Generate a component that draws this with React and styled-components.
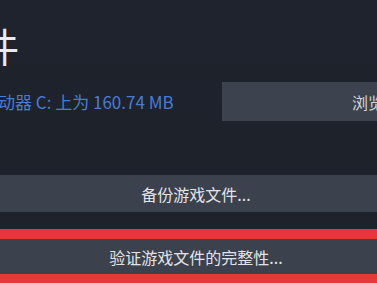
import styled, { createGlobalStyle } from "styled-components"

const Global = createGlobalStyle`
  html, body {
    margin: 0;
    padding: 0;
    background: #1e222b;
  }
  body {
    font-family: "Noto Sans CJK SC", "Noto Sans", sans-serif;
  }
`

const Page = styled.div`
  width: 377px;
  height: 283px;
  overflow: hidden;
  background: linear-gradient(180deg, #1f232d 0%, #1d212a 100%);
  position: relative;
`

const Panel = styled.div`
  width: 392px;
  display: flex;
  flex-direction: column;
`

const Title = styled.h1`
  margin: 0;
  padding-top: 19px;
  margin-left: -61px;
  font-size: 40px;
  line-height: 52px;
  font-weight: 400;
  color: #e9eaec;
  white-space: nowrap;
`

const Row = styled.div`
  display: flex;
  align-items: center;
  margin-top: 11px;
  height: 39px;
`

const Info = styled.div`
  flex: 1;
  margin-left: -19px;
  font-size: 17px;
  color: #4a7cd3;
  white-space: nowrap;
`

const Browse = styled.div`
  width: 300px;
  height: 39px;
  flex-shrink: 0;
  margin-right: -130px;
  background: #3c424e;
  color: #d4d6da;
  font-size: 16px;
  display: flex;
  align-items: center;
  padding-left: 130px;
  box-sizing: border-box;
  white-space: nowrap;
`

const Button = styled.div`
  height: ${props => props.h}px;
  background: #3b414d;
  color: #e2e3e6;
  font-size: 16px;
  display: flex;
  align-items: center;
  justify-content: center;
  margin-top: ${props => props.top}px;
`

const Highlight = styled.div`
  margin-top: 17px;
  margin-left: -10px;
  margin-right: -10px;
  border: 10px solid #e5383b;
`

export default function App() {
  return (
    <Page>
      <Global />
      <Panel>
        <Title>文件</Title>
        <Row>
          <Info>驱动器 C: 上为 160.74 MB</Info>
          <Browse>浏览...</Browse>
        </Row>
        <Button h={37} top={54}>备份游戏文件...</Button>
        <Highlight>
          <Button h={35} top={0}>验证游戏文件的完整性...</Button>
        </Highlight>
      </Panel>
    </Page>
  )
}
